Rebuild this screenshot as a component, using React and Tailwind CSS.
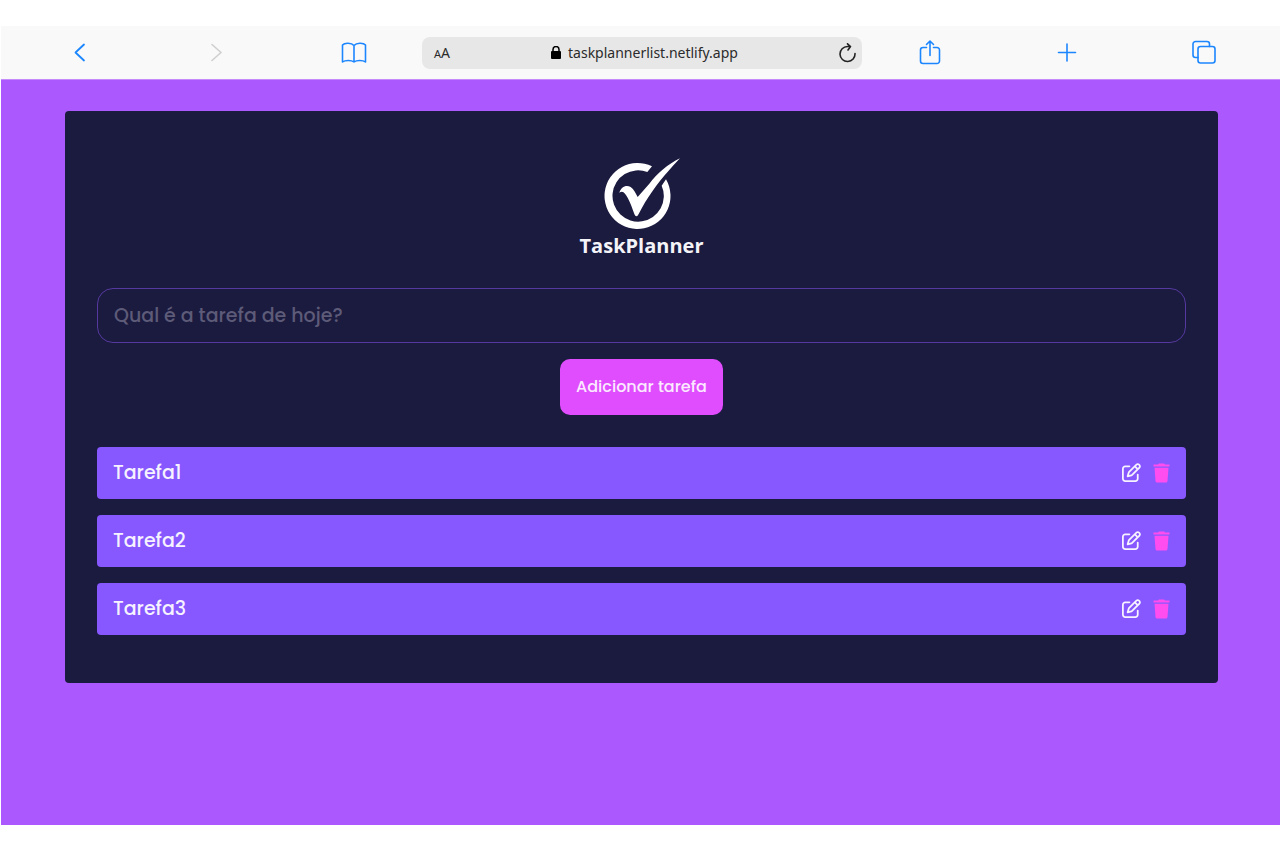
import { useState } from "react";
import { FaRegPenToSquare } from "react-icons/fa6";

function Logo() {
  return (
    <div className="flex flex-col items-center gap-0.5">
      <svg width="76" height="72" viewBox="0 0 228 216" fill="#fff" aria-hidden="true">
        <path d="M144 25A99 99 0 1 0 186 64L173 83A77 77 0 1 1 130 42Z" />
        <path d="M228 1C192 18 160 46 136 77L101 117C95 106 90 94 80 87C66 79 51 87 46 104Q56 98 63 107C75 122 83 145 92 170Q98 180 104 168C128 120 160 76 194 38Q208 22 228 1Z" />
      </svg>
      <h1 className="font-['Open_Sans',sans-serif] text-xl leading-7 font-bold text-[#f4f4f8]">
        TaskPlanner
      </h1>
    </div>
  );
}

function TrashIcon() {
  return (
    <svg width="17" height="20" viewBox="0 0 17 20" fill="#ff4df0" aria-hidden="true">
      <path d="M0.500 1.500H5L6 0.500H11L12 1.500H16.500V3.500H0.500ZM1.500 4.800H15.500L14.500 18Q14.300 19.500 13 19.500H4Q2.700 19.500 2.500 18Z" />
    </svg>
  );
}

function ToolbarButton({ label, muted, children }) {
  return (
    <button
      type="button"
      aria-label={label}
      className={
        muted
          ? "flex items-center justify-center text-[#cfcfcf]"
          : "flex items-center justify-center text-[#1c86ff]"
      }
    >
      <svg
        width="28"
        height="28"
        viewBox="0 0 28 28"
        fill="none"
        stroke="currentColor"
        strokeWidth="1.6"
        strokeLinecap="round"
        strokeLinejoin="round"
      >
        {children}
      </svg>
    </button>
  );
}

function BrowserBar() {
  return (
    <header className="grid h-[53px] grid-cols-[1fr_1fr_1fr_minmax(0,440px)_1fr_1fr_1fr] items-center bg-[#f9f9f9] pr-2 pl-[11px]">
      <ToolbarButton label="Back">
        <path d="M18 5.500L9.500 13.500L18 21.500" strokeWidth="1.8" />
      </ToolbarButton>
      <ToolbarButton label="Forward" muted>
        <path d="M9 5.500L18 13.500L9 21.500" />
      </ToolbarButton>
      <ToolbarButton label="Bookmarks">
        <path d="M14 6.500C11.500 3.500 4.500 3.500 2.500 6V23C5 21 11.500 21 14 23C16.500 21 23 21 25.500 23V6C23.500 3.500 16.500 3.500 14 6.500ZM14 6.500V23" />
      </ToolbarButton>
      <div className="flex h-8 items-center justify-between rounded-lg bg-[#e7e7e7] pr-1.5 pl-3 font-['Noto_Sans',sans-serif] text-[#2b2b2b]">
        <button type="button" aria-label="Text size" className="flex items-baseline">
          <span className="text-[11px]">A</span>
          <span className="text-sm">A</span>
        </button>
        <div className="flex items-center gap-[7px]">
          <svg width="10" height="13" viewBox="0 0 10 13" aria-hidden="true">
            <rect y="5" width="10" height="8" rx="1" fill="#000" />
            <path d="M2 6V3.500a3 3 0 0 1 6 0V6" fill="none" stroke="#000" strokeWidth="1.500" />
          </svg>
          <span className="text-sm">taskplannerlist.netlify.app</span>
        </div>
        <button type="button" aria-label="Reload">
          <svg
            width="17"
            height="20"
            viewBox="0 0 17 20"
            fill="none"
            stroke="#222"
            strokeWidth="1.600"
            strokeLinecap="round"
            strokeLinejoin="round"
          >
            <path d="M16 10.500A7.500 7.500 0 1 1 8.500 3.500H11.500M8.500 0.800L11.500 3.500L9 7" />
          </svg>
        </button>
      </div>
      <ToolbarButton label="Share">
        <path d="M10.500 8.500H7A2.500 2.500 0 0 0 4.500 11V22A2.500 2.500 0 0 0 7 24.500H21A2.500 2.500 0 0 0 23.500 22V11A2.500 2.500 0 0 0 21 8.500H17.500M14 16.500V2.500M10.500 5.500L14 2L17.500 5.500" />
      </ToolbarButton>
      <ToolbarButton label="New tab">
        <path d="M14 5V22M5.500 13.500H22.500" />
      </ToolbarButton>
      <ToolbarButton label="Tabs">
        <rect x="8" y="7.500" width="17" height="16.500" rx="2.500" />
        <path d="M8 18.500H5.500A2.500 2.500 0 0 1 3 16V5A2.500 2.500 0 0 1 5.500 2.500H17A2.500 2.500 0 0 1 19.500 5V7.500" />
      </ToolbarButton>
    </header>
  );
}

function TaskItem({ name, onDelete }) {
  return (
    <li className="flex h-[52px] items-center justify-between rounded bg-[#8758ff] px-4 text-[#f6f2ff]">
      <span className="text-[19px] leading-[30px] font-medium">{name}</span>
      <div className="flex items-start gap-3">
        <button type="button" aria-label={`Editar ${name}`}>
          <FaRegPenToSquare className="size-[19px]" />
        </button>
        <button type="button" aria-label={`Excluir ${name}`} onClick={onDelete}>
          <TrashIcon />
        </button>
      </div>
    </li>
  );
}

export default function App() {
  const [tasks, setTasks] = useState(["Tarefa1", "Tarefa2", "Tarefa3"]);
  const [draft, setDraft] = useState("");

  function addTask(event) {
    event.preventDefault();
    if (!draft.trim()) return;
    setTasks([...tasks, draft.trim()]);
    setDraft("");
  }

  return (
    <div className="flex min-h-screen flex-col bg-white pt-[26px] pb-[25px] pl-px font-['Poppins','Inter',sans-serif]">
      <BrowserBar />
      <main className="grow border-t border-[#c68bfb] bg-[#ab58ff] pt-[31px] pr-[62px] pb-8 pl-16">
        <section className="rounded bg-[#1b1a3f] px-8 pt-[47px] pb-12">
          <Logo />
          <form onSubmit={addTask} className="mt-7 flex flex-col items-center gap-4">
            <input
              type="text"
              aria-label="Tarefa"
              placeholder="Qual é a tarefa de hoje?"
              value={draft}
              onChange={(event) => setDraft(event.target.value)}
              className="h-[55px] w-full rounded-2xl border border-[#55399f] bg-transparent px-4 text-[19px] font-medium text-white outline-none placeholder:text-[#5d5b78]"
            />
            <button
              type="submit"
              className="h-14 rounded-[10px] bg-[#e04dff] px-4 text-base font-medium text-[#fbeaff]"
            >
              Adicionar tarefa
            </button>
          </form>
          <ul className="mt-8 flex flex-col gap-4">
            {tasks.map((name, index) => (
              <TaskItem
                key={index}
                name={name}
                onDelete={() => setTasks(tasks.filter((_, i) => i !== index))}
              />
            ))}
          </ul>
        </section>
      </main>
    </div>
  );
}
